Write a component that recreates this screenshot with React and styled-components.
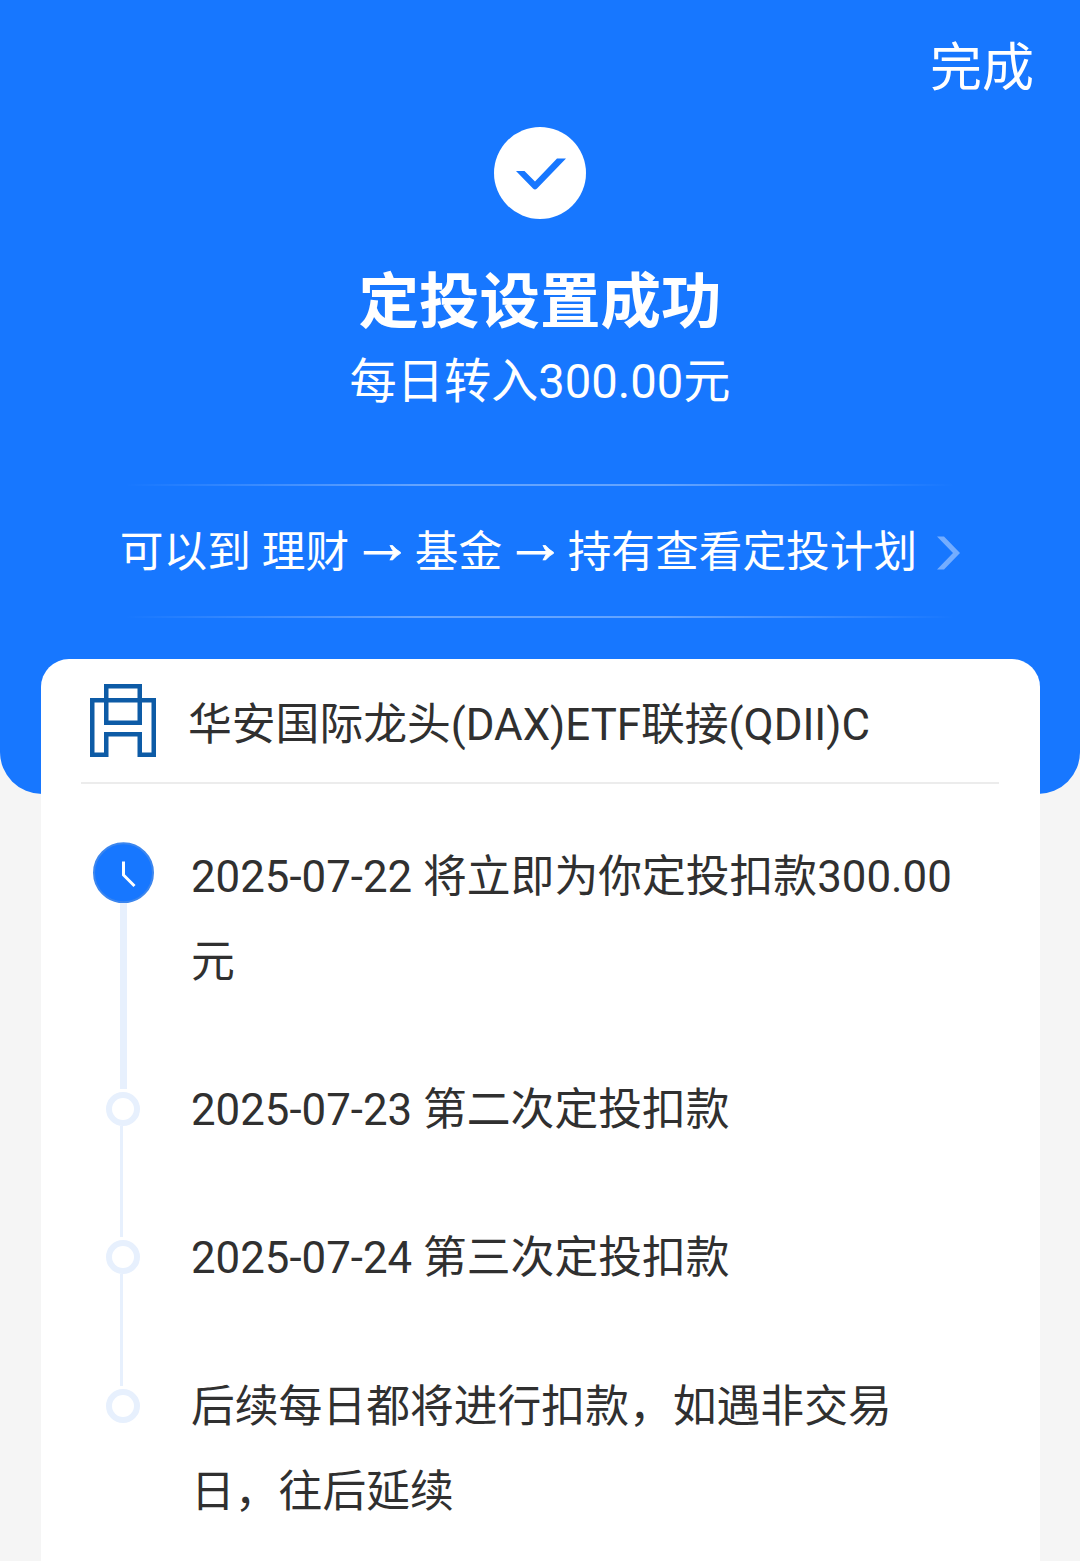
import React from "react";
import styled, { createGlobalStyle } from "styled-components";

const GlobalStyle = createGlobalStyle`
  * {
    box-sizing: border-box;
  }

  body {
    margin: 0;
    background: #f5f5f5;
    font-family: Roboto, "Noto Sans CJK SC", sans-serif;
  }
`

/********** ---PAGE--- **********/
const Page = styled.div`
  width: 1080px;
  height: 1561px;
  overflow: hidden;
  background: #f5f5f5;
`

/********** ---HEADER--- **********/
const Header = styled.header`
  display: flex;
  flex-direction: column;
  align-items: center;
  height: 794px;
  border-radius: 0 0 42px 42px;
  background: #1777ff;
  color: #fff;
`

const DoneButton = styled.button`
  align-self: flex-end;
  margin: 34px 46px 0 0;
  padding: 0;
  border: none;
  background: none;
  color: inherit;
  font: inherit;
  font-size: 52px;
  line-height: 70px;
`

const SuccessIcon = styled.svg`
  width: 92px;
  height: 92px;
  margin-top: 23px;
`

const Title = styled.h1`
  margin: 44px 0 0;
  font-size: 60.5px;
  font-weight: 700;
  line-height: 80px;
`

const Subtitle = styled.p`
  margin: 7px 0 0;
  font-size: 47.2px;
  line-height: 64px;
`

const HintLine = styled.div`
  width: 830px;
  height: 2px;
  background: linear-gradient(to right, rgba(255, 255, 255, 0), rgba(255, 255, 255, 0.33) 35%, rgba(255, 255, 255, 0.33) 65%, rgba(255, 255, 255, 0));
`

const Hint = styled.div`
  display: flex;
  flex-direction: column;
  align-items: center;
  margin-top: 70px;
`

const HintText = styled.a`
  display: flex;
  align-items: center;
  height: 130px;
  font-size: 43.7px;
  line-height: 60px;
  white-space: pre;
`

const HintLabel = styled.span`
  margin-top: 1px;
`

const Arrow = styled.span`
  margin: 0 1.7px 0 2.9px;
  font-family: "Liberation Sans", sans-serif;
  font-size: 61px;
  line-height: 0;
  vertical-align: 4px;
  -webkit-text-stroke: 0.8px #fff;
`

const Chevron = styled.svg`
  width: 24px;
  height: 36px;
  margin: 4px 0 0 19px;
`

/********** ---CARD--- **********/
const Card = styled.main`
  display: flow-root;
  width: 999px;
  height: 940px;
  margin: -135px 0 0 41px;
  padding: 0 41px 0 40px;
  border-radius: 28px;
  background: #fff;
  color: #303030;
`

const Fund = styled.div`
  display: flex;
  align-items: center;
  height: 125px;
  padding-left: 9px;
  border-bottom: 2px solid #ececec;
`

const FundLogo = styled.svg`
  width: 66px;
  height: 74px;
`

const FundName = styled.h2`
  margin: 9px 0 0 32px;
  font-size: 43.8px;
  font-weight: 400;
  line-height: 60px;
`

/********** ---TIMELINE--- **********/
const Timeline = styled.ul`
  margin: 58px 0 0;
  padding: 0 0 0 12px;
  list-style: none;
`

const Step = styled.li`
  display: flex;
  height: ${props => props.$height}px;
`

const Rail = styled.div`
  display: flex;
  flex-direction: column;
  width: 61px;
  padding-bottom: 3px;
`

const ClockIcon = styled.svg`
  width: 61px;
  height: 61px;
`

const Dot = styled.div`
  width: 34px;
  height: 34px;
  margin-left: 13px;
  border: 6px solid #e7f0fd;
  border-radius: 50%;
`

const Line = styled.div`
  flex: 1;
  width: ${props => props.$wide ? 7 : 3}px;
  margin-left: 27px;
  background: #e7f0fd;
`

const StepText = styled.p`
  width: 768px;
  margin: ${props => props.$first ? -7 : -24}px 0 0 37px;
  font-size: 43.8px;
  line-height: 85px;
`

const steps = [
  { text: "2025-07-22 将立即为你定投扣款300.00元", height: 250 },
  { text: "2025-07-23 第二次定投扣款", height: 148 },
  { text: "2025-07-24 第三次定投扣款", height: 149 },
  { text: "后续每日都将进行扣款，如遇非交易日，往后延续", height: 170 },
]

function App() {
  const renderSteps = steps.map((step, index) => {
    const first = index === 0
    const last = index === steps.length - 1

    return (
      <Step key={step.text} $height={step.height}>
        <Rail>
          {first ? (
            <ClockIcon viewBox="0 0 61 61">
              <circle cx="30.5" cy="30.8" r="29.5" fill="#1777ff" stroke="#3c86ee" strokeWidth="2" />
              <path d="M30.5 19.5V33L41.5 44" fill="none" stroke="#fff" strokeWidth="3" />
            </ClockIcon>
          ) : <Dot />}
          {!last && <Line $wide={first} />}
        </Rail>
        <StepText $first={first}>{step.text}</StepText>
      </Step>
    )
  })

  return (
    <Page>
      <GlobalStyle />

      <Header>
        <DoneButton>完成</DoneButton>
        <SuccessIcon viewBox="0 0 92 92">
          <circle cx="46" cy="46" r="46" fill="#fff" />
          <path d="M22 44H30.5L41 54.5L63 31.500H72L43 61.500Q41 63.500 39 61.500Z" fill="#1777ff" />
        </SuccessIcon>
        <Title>定投设置成功</Title>
        <Subtitle>每日转入300.00元</Subtitle>

        <Hint>
          <HintLine />
          <HintText>
            <HintLabel>可以到 理财<Arrow>→</Arrow>基金<Arrow>→</Arrow>持有查看定投计划</HintLabel>
            <Chevron viewBox="0 0 24 36">
              <path d="M1 1.500H8L24 18L8 34.500H1L17 18Z" fill="#74adff" />
            </Chevron>
          </HintText>
          <HintLine />
        </Hint>
      </Header>

      <Card>
        <Fund>
          <FundLogo viewBox="0 0 66 74" fill="none" stroke="#0d5ba6" strokeWidth="4.5">
            <path d="M16.250 2.250H49.750V38.750H16.250Z" />
            <path d="M2.250 16.250H63.750V70.750H49.750V50.250H16.250V70.750H2.250Z" />
          </FundLogo>
          <FundName>华安国际龙头(DAX)ETF联接(QDII)C</FundName>
        </Fund>

        <Timeline>{renderSteps}</Timeline>
      </Card>
    </Page>
  );
}

export default App;
